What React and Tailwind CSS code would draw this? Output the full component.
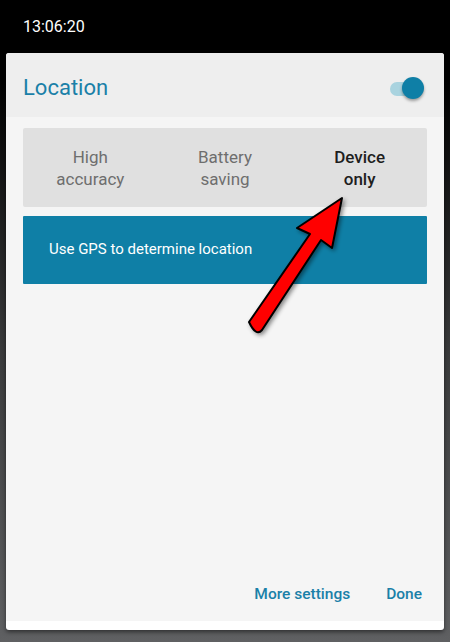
import React from 'react';

const font = { fontFamily: 'Roboto, "Noto Sans", sans-serif' };

function Toggle() {
  return (
    <div className="relative h-[24px] w-[36px]">
      <div className="absolute left-[2px] top-[6px] h-[14px] w-[30px] rounded-full bg-[#a9d3df]" />
      <div className="absolute right-0 top-[1px] h-[22px] w-[22px] rounded-full bg-[#0f7fa6] shadow-[0_2px_3px_rgba(0,0,0,0.35)]" />
    </div>
  );
}

function Arrow() {
  // annotation arrow drawn over the dialog
  return (
    <svg className="pointer-events-none absolute left-0 top-0" width="450" height="642" viewBox="0 0 450 642">
      <defs>
        <filter id="sh" x="-20%" y="-20%" width="140%" height="140%">
          <feDropShadow dx="2" dy="2" stdDeviation="2" floodColor="#000" floodOpacity="0.45" />
        </filter>
      </defs>
      <path
        d="M342 198 L332 248 L321 240 L262 330 Q256 337 249 322 L310 234 L297 228 Z"
        fill="#ff0000"
        stroke="#000"
        strokeWidth="2"
        strokeLinejoin="round"
        filter="url(#sh)"
      />
    </svg>
  );
}

export default function App() {
  const modes = [
    { label: ['High', 'accuracy'], active: false },
    { label: ['Battery', 'saving'], active: false },
    { label: ['Device', 'only'], active: true },
  ];

  return (
    <div
      className="relative flex h-[642px] w-[450px] flex-col overflow-hidden bg-[linear-gradient(180deg,#000_0%,#000_12%,#3a3b3c_55%,#5f6062_100%)]"
      style={font}
    >
      {/* status bar */}
      <div className="flex h-[53px] items-start pl-[23px] pt-[17px] text-[16px] leading-[20px] text-white">13:06:20</div>

      {/* dialog */}
      <div className="mx-[6px] flex h-[577px] flex-col overflow-hidden rounded-[3px] border-b-[9px] border-white bg-[#f5f5f5] shadow-[0_2px_4px_rgba(0,0,0,0.5)]">
        <div className="flex h-[64px] items-center justify-between bg-[#eeeeee] pl-[17px] pr-[20px] pt-[5px]">
          <span className="text-[22px] text-[#1a80a8]">Location</span>
          <Toggle />
        </div>

        <div className="flex flex-1 flex-col px-[17px] pt-[11px]">
          <div className="grid h-[79px] grid-cols-3 rounded-[2px] bg-[#e0e0e0]">
            {modes.map((m) => (
              <div
                key={m.label[0]}
                className={`flex flex-col items-center justify-center text-[17px] leading-[22px] ${
                  m.active ? 'font-medium text-[#1e1e1e]' : 'text-[#6e6e6e]'
                }`}
              >
                <span>{m.label[0]}</span>
                <span>{m.label[1]}</span>
              </div>
            ))}
          </div>

          <div className="mt-[9px] flex h-[68px] items-center rounded-[1px] bg-[#0f7fa6] pb-[2px] pl-[26px] text-[15px] text-white">
            Use GPS to determine location
          </div>

          <div className="flex-1" />

          <div className="flex justify-end gap-[36px] pb-[15px] pr-[5px] text-[15.5px] font-medium text-[#1a80a8]">
            <span>More settings</span>
            <span>Done</span>
          </div>
        </div>
      </div>

      <Arrow />
    </div>
  );
}
